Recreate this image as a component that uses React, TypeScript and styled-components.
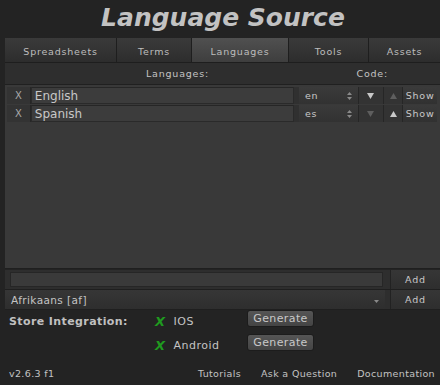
import React from 'react'
import styled, { createGlobalStyle } from 'styled-components'

const GlobalStyle = createGlobalStyle`
  body {
    margin: 0;
    background: #232323;
    font-family: "DejaVu Sans", Verdana, sans-serif;
    color: #c4c4c4;
  }
`

const Page = styled.div`
  width: 440px;
  height: 385px;
  overflow: hidden;
  background: #232323;
`

const Title = styled.div`
  height: 38px;
  display: flex;
  justify-content: center;
  align-items: center;
  font-size: 25px;
  font-weight: bold;
  font-style: italic;
  color: #c2c2c2;
  padding: 0 0 3px 6px;
  box-sizing: border-box;
`

const Tabs = styled.div`
  display: flex;
  margin-left: 5px;
  height: 25px;
`

const Tab = styled.div<{ $w: number; $active?: boolean }>`
  width: ${({ $w }) => $w}px;
  display: flex;
  align-items: center;
  justify-content: center;
  padding-top: 2px;
  font-size: 9.5px;
  letter-spacing: 0.8px;
  color: #bdbdbd;
  box-sizing: border-box;
  border-right: 1px solid #1e1e1e;
  border-bottom: 1px solid #1e1e1e;
  background: ${({ $active }) =>
    $active
      ? 'linear-gradient(#505050, #3e3e3e)'
      : 'linear-gradient(#3a3a3a, #2d2d2d)'};
  &:last-child {
    border-right: none;
  }
`

const Header = styled.div`
  margin-left: 5px;
  height: 21px;
  display: flex;
  align-items: center;
  background: #2e2e2e;
  border-bottom: 1px solid #202020;
  font-size: 9.5px;
  letter-spacing: 0.8px;
  color: #c4c4c4;
`

const HeaderCell = styled.div<{ $w: number }>`
  width: ${({ $w }) => $w}px;
  text-align: right;
`

const Panel = styled.div`
  margin-left: 5px;
  height: 184px;
  background: #393939;
  padding: 2px 3px 0 2px;
  box-sizing: border-box;
  display: flex;
  flex-direction: column;
  gap: 1px;
  border-bottom: 1px solid #1f1f1f;
`

const Row = styled.div`
  display: flex;
  height: 17px;
  background: #303030;
  align-items: stretch;
`

const XCell = styled.div`
  width: 23px;
  display: flex;
  align-items: center;
  justify-content: center;
  font-size: 10px;
  color: #a8a8a8;
  background: #333;
  border-right: 1px solid #262626;
`

const NameField = styled.div`
  width: 265px;
  display: flex;
  align-items: center;
  padding-left: 3px;
  box-sizing: border-box;
  font-size: 12px;
  color: #c8c8c8;
  background: #3c3c3c;
  border: 1px solid #2a2a2a;
  border-top-color: #262626;
  margin-right: 5px;
`

const CodeSelect = styled.div`
  width: 60px;
  display: flex;
  align-items: center;
  justify-content: space-between;
  padding: 0 6px 0 6px;
  box-sizing: border-box;
  font-size: 9.5px;
  letter-spacing: 0.8px;
  color: #c8c8c8;
  background: linear-gradient(#3a3a3a, #323232);
  border-right: 1px solid #262626;
`

const ArrowCell = styled.div<{ $w: number; $on?: boolean }>`
  width: ${({ $w }) => $w}px;
  display: flex;
  align-items: center;
  justify-content: center;
  color: ${({ $on }) => ($on ? '#c8c8c8' : '#5e5e5e')};
  background: #333;
  border-right: 1px solid #262626;
`

const ShowButton = styled.div`
  width: 34px;
  display: flex;
  align-items: center;
  justify-content: center;
  font-size: 9.5px;
  letter-spacing: 0.8px;
  color: #c8c8c8;
  background: linear-gradient(#3a3a3a, #313131);
`

const AddRow = styled.div<{ $gap?: number }>`
  margin-left: 5px;
  margin-top: ${({ $gap }) => $gap ?? 0}px;
  height: 19px;
  display: flex;
  background: #2e2e2e;
  border-bottom: 1px solid #1f1f1f;
`

const AddField = styled.div`
  margin: 2px 7px 2px 5px;
  width: 373px;
  background: #3a3a3a;
  border: 1px solid #262626;
  box-sizing: border-box;
`

const LangSelect = styled.div`
  width: 380px;
  margin-right: 5px;
  display: flex;
  align-items: center;
  justify-content: space-between;
  padding: 0 6px 0 6px;
  box-sizing: border-box;
  font-size: 10.5px;
  letter-spacing: 0.4px;
  color: #c4c4c4;
  background: linear-gradient(#363636, #2e2e2e);
`

const AddButton = styled.div`
  flex: 1;
  display: flex;
  align-items: center;
  justify-content: center;
  font-size: 9.5px;
  letter-spacing: 0.8px;
  color: #c8c8c8;
  background: linear-gradient(#363636, #2e2e2e);
  border-left: 1px solid #222;
`

const Store = styled.div`
  display: grid;
  grid-template-columns: 146px 92px 70px;
  grid-auto-rows: 24px;
  padding: 0 0 0 9px;
  margin-top: -1px;
  align-items: center;
`

const StoreLabel = styled.div`
  font-size: 11px;
  font-weight: bold;
  letter-spacing: 0.4px;
  color: #c0c0c0;
`

const Platform = styled.div`
  display: flex;
  align-items: center;
  gap: 8px;
  font-size: 11px;
  letter-spacing: 0.5px;
  color: #c4c4c4;
`

const Check = styled.span`
  color: #1f9a1f;
  font-size: 13px;
  font-style: italic;
  font-weight: bold;
`

const GenerateButton = styled.div`
  width: 67px;
  height: 17px;
  display: flex;
  align-items: center;
  justify-content: center;
  font-size: 11px;
  letter-spacing: 0.4px;
  color: #c8c8c8;
  background: linear-gradient(#555, #444);
  border: 1px solid #1c1c1c;
  border-radius: 3px;
  box-sizing: border-box;
  margin-top: -6px;
`

const Footer = styled.div`
  display: flex;
  align-items: center;
  padding: 11px 5px 0 9px;
  font-size: 9.5px;
  letter-spacing: 0.35px;
  color: #c4c4c4;
`

const FooterLinks = styled.div`
  margin-left: auto;
  display: flex;
  gap: 20px;
`

const Tri = ({ up, size = 7 }: { up?: boolean; size?: number }) => (
  <svg width={size} height={size - 1} viewBox="0 0 7 6">
    <path d={up ? 'M3.5 0 L7 6 L0 6 Z' : 'M0 0 L7 0 L3.5 6 Z'} fill="currentColor" />
  </svg>
)

const UpDownIcon = () => (
  <svg width="5" height="8" viewBox="0 0 5 8">
    <path d="M2.5 0 L5 3 L0 3 Z M0 5 L5 5 L2.5 8 Z" fill="#8a8a8a" />
  </svg>
)

const DropIcon = () => (
  <svg width="5" height="3" viewBox="0 0 5 3" style={{ marginTop: 4 }}>
    <path d="M0 0 L5 0 L2.5 3 Z" fill="#8a8a8a" />
  </svg>
)

const languages = [
  { name: 'English', code: 'en', down: true, up: false },
  { name: 'Spanish', code: 'es', down: false, up: true }
]

export default function App() {
  return (
    <Page>
      <GlobalStyle />
      <Title>Language Source</Title>
      <Tabs>
        <Tab $w={112}>Spreadsheets</Tab>
        <Tab $w={75}>Terms</Tab>
        <Tab $w={97} $active>Languages</Tab>
        <Tab $w={80}>Tools</Tab>
        <Tab $w={71}>Assets</Tab>
      </Tabs>
      <Header>
        <HeaderCell $w={204}>Languages:</HeaderCell>
        <HeaderCell $w={179}>Code:</HeaderCell>
      </Header>
      <Panel>
        {languages.map(l => (
          <Row key={l.code}>
            <XCell>X</XCell>
            <NameField>{l.name}</NameField>
            <CodeSelect>
              {l.code}
              <UpDownIcon />
            </CodeSelect>
            <ArrowCell $w={25} $on={l.down}>
              <Tri />
            </ArrowCell>
            <ArrowCell $w={18} $on={l.up}>
              <Tri up />
            </ArrowCell>
            <ShowButton>Show</ShowButton>
          </Row>
        ))}
      </Panel>
      <AddRow $gap={1}>
        <AddField />
        <AddButton>Add</AddButton>
      </AddRow>
      <AddRow>
        <LangSelect>
          Afrikaans [af]
          <DropIcon />
        </LangSelect>
        <AddButton>Add</AddButton>
      </AddRow>
      <Store>
        <StoreLabel>Store Integration:</StoreLabel>
        <Platform>
          <Check>X</Check>IOS
        </Platform>
        <GenerateButton>Generate</GenerateButton>
        <div />
        <Platform>
          <Check>X</Check>Android
        </Platform>
        <GenerateButton>Generate</GenerateButton>
      </Store>
      <Footer>
        v2.6.3 f1
        <FooterLinks>
          <span>Tutorials</span>
          <span>Ask a Question</span>
          <span>Documentation</span>
        </FooterLinks>
      </Footer>
    </Page>
  )
}
